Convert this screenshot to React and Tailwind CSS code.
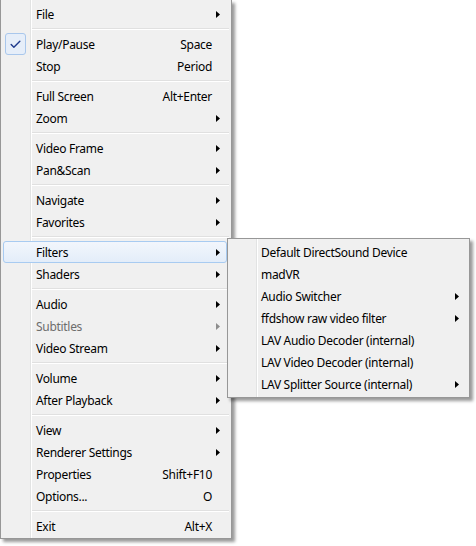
import { Check } from 'lucide-react';

const mainMenu = [
  [{ label: 'File', sub: true }],
  [
    { label: 'Play/Pause', key: 'Space', checked: true },
    { label: 'Stop', key: 'Period' },
  ],
  [
    { label: 'Full Screen', key: 'Alt+Enter' },
    { label: 'Zoom', sub: true },
  ],
  [
    { label: 'Video Frame', sub: true },
    { label: 'Pan&Scan', sub: true },
  ],
  [
    { label: 'Navigate', sub: true },
    { label: 'Favorites', sub: true },
  ],
  [
    { label: 'Filters', sub: true, active: true },
    { label: 'Shaders', sub: true },
  ],
  [
    { label: 'Audio', sub: true },
    { label: 'Subtitles', sub: true, disabled: true },
    { label: 'Video Stream', sub: true },
  ],
  [
    { label: 'Volume', sub: true },
    { label: 'After Playback', sub: true },
  ],
  [
    { label: 'View', sub: true },
    { label: 'Renderer Settings', sub: true },
    { label: 'Properties', key: 'Shift+F10' },
    { label: 'Options...', key: 'O' },
  ],
  [{ label: 'Exit', key: 'Alt+X' }],
];

const filterMenu = [
  { label: 'Default DirectSound Device' },
  { label: 'madVR' },
  { label: 'Audio Switcher', sub: true },
  { label: 'ffdshow raw video filter', sub: true },
  { label: 'LAV Audio Decoder (internal)' },
  { label: 'LAV Video Decoder (internal)' },
  { label: 'LAV Splitter Source (internal)', sub: true },
];

function Arrow({ disabled }) {
  return (
    <svg width="4" height="7" viewBox="0 0 4 7" className="shrink-0">
      <path d="M0 0 L4 3.5 L0 7 Z" fill={disabled ? '#8d8d8d' : '#000'} />
    </svg>
  );
}

function Item({ item }) {
  return (
    <div
      className={`relative flex items-center h-[22px] ml-[2px] mr-[4px] rounded-[3px] border ${
        item.active
          ? 'border-[#a8cbf1] bg-gradient-to-b from-[#f2f6fc] to-[#e3edf9]'
          : 'border-transparent'
      }`}
    >
      {item.checked && (
        <div className="absolute left-[1px] top-[-1px] w-[21px] h-[22px] rounded-[3px] border border-[#a9c7ec] bg-[#e6eef9] flex items-center justify-center">
          <Check size={13} strokeWidth={2.6} className="text-[#1e3a8c]" />
        </div>
      )}
      <span
        className={`pl-[32px] pt-[2px] flex-1 ${item.disabled ? 'text-[#6d6d6d]' : 'text-[#000]'}`}
      >
        {item.label}
      </span>
      {item.key && <span className="pr-[14px] pt-[2px]">{item.key}</span>}
      {item.sub && (
        <span className="pr-[6px] flex items-center">
          <Arrow disabled={item.disabled} />
        </span>
      )}
    </div>
  );
}

function Separator() {
  return (
    <div className="ml-[30px] mr-[2px] my-[3px] h-[2px] border-t border-[#e0e0e0] bg-white" />
  );
}

export default function App() {
  return (
    <div
      className="relative w-[476px] h-[546px] bg-white text-[12px] leading-none tracking-[-0.3px] overflow-hidden"
      style={{ fontFamily: '"Segoe UI", "Noto Sans", sans-serif' }}
    >
      {/* main context menu */}
      <div className="relative w-[232px] pt-[3px] pb-[1px] bg-[#f0f0f0] border-x border-b border-[#979797] shadow-[3px_3px_3px_rgba(0,0,0,0.4)]">
        <div className="absolute left-[29px] top-0 bottom-0 w-[2px] border-l border-[#e2e3e3] bg-white" />
        {mainMenu.map((group, gi) => (
          <div key={gi}>
            {gi > 0 && <Separator />}
            {group.map((item) => (
              <Item key={item.label} item={item} />
            ))}
          </div>
        ))}
      </div>

      {/* Filters submenu */}
      <div className="absolute left-[227px] top-[238px] w-[243px] py-[2px] bg-[#f0f0f0] border border-[#979797] shadow-[3px_3px_3px_rgba(0,0,0,0.4)]">
        <div className="absolute left-[28px] top-0 bottom-0 w-[2px] border-l border-[#e2e3e3] bg-white" />
        {filterMenu.map((item) => (
          <div key={item.label} className="relative flex items-center h-[22px] ml-[2px] mr-[4px]">
            <span className="pl-[31px] pt-[2px] flex-1">{item.label}</span>
            {item.sub && (
              <span className="pr-[6px] flex items-center">
                <Arrow />
              </span>
            )}
          </div>
        ))}
      </div>
    </div>
  );
}
